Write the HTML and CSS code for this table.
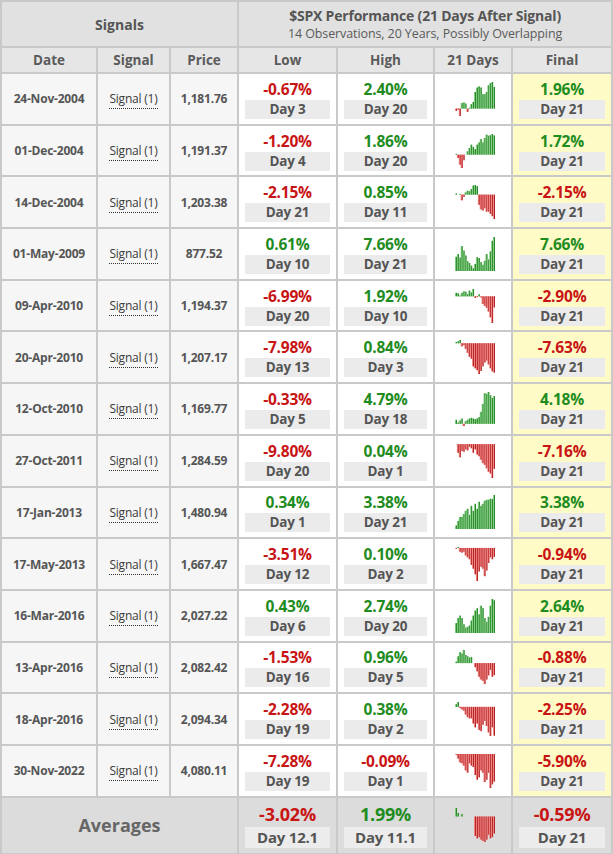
FILE: index.html
```html
<!DOCTYPE html>
<html lang="en">
<head>
<meta charset="utf-8">
<title>$SPX Performance</title>
<link rel="stylesheet" href="styles.css">
</head>
<body>
<table class="perf">
  <colgroup>
    <col class="c-date"><col class="c-signal"><col class="c-price"><col class="c-low"><col class="c-high"><col class="c-spark"><col class="c-final">
  </colgroup>
  <thead>
    <tr class="head-top">
      <th colspan="3" class="grp">Signals</th>
      <th colspan="4" class="grp">
        <div class="title">$SPX Performance (21 Days After Signal)</div>
        <div class="subtitle">14 Observations, 20 Years, Possibly Overlapping</div>
      </th>
    </tr>
    <tr class="head-cols">
      <th>Date</th><th>Signal</th><th>Price</th><th>Low</th><th>High</th><th>21 Days</th><th>Final</th>
    </tr>
  </thead>
  <tbody>
    <tr>
      <td class="info">24-Nov-2004</td><td class="info"><span class="sig">Signal (1)</span></td><td class="info">1,181.76</td>
      <td class="val"><div class="pct neg">-0.67%</div><div class="day">Day 3</div></td>
      <td class="val"><div class="pct pos">2.40%</div><div class="day">Day 20</div></td>
      <td class="chart"><div class="spark" data-v="-0.2,-0.1,-0.67,0.5,0.55,0.45,-0.3,0.05,0.4,0.6,1.5,1.9,2.0,1.9,1.3,1.3,1.5,2.1,2.3,2.40,1.96"></div></td>
      <td class="val final"><div class="pct pos">1.96%</div><div class="day">Day 21</div></td>
    </tr>
    <tr>
      <td class="info">01-Dec-2004</td><td class="info"><span class="sig">Signal (1)</span></td><td class="info">1,191.37</td>
      <td class="val"><div class="pct neg">-1.20%</div><div class="day">Day 4</div></td>
      <td class="val"><div class="pct pos">1.86%</div><div class="day">Day 20</div></td>
      <td class="chart"><div class="spark" data-v="0.05,-0.3,-0.9,-1.20,-0.5,0.0,0.3,0.6,0.9,0.7,0.5,0.9,1.1,1.4,1.1,1.5,1.8,1.7,1.75,1.86,1.72"></div></td>
      <td class="val final"><div class="pct pos">1.72%</div><div class="day">Day 21</div></td>
    </tr>
    <tr>
      <td class="info">14-Dec-2004</td><td class="info"><span class="sig">Signal (1)</span></td><td class="info">1,203.38</td>
      <td class="val"><div class="pct neg">-2.15%</div><div class="day">Day 21</div></td>
      <td class="val"><div class="pct pos">0.85%</div><div class="day">Day 11</div></td>
      <td class="chart"><div class="spark" data-v="0.1,0.0,0.05,-0.5,-0.2,0.2,0.35,0.3,0.5,0.8,0.85,0.75,-0.9,-1.3,-1.4,-1.2,-1.5,-1.5,-1.7,-1.9,-2.15"></div></td>
      <td class="val final"><div class="pct neg">-2.15%</div><div class="day">Day 21</div></td>
    </tr>
    <tr>
      <td class="info">01-May-2009</td><td class="info"><span class="sig">Signal (1)</span></td><td class="info">877.52</td>
      <td class="val"><div class="pct pos">0.61%</div><div class="day">Day 10</div></td>
      <td class="val"><div class="pct pos">7.66%</div><div class="day">Day 21</div></td>
      <td class="chart"><div class="spark" data-v="3.2,3.8,3.0,5.6,4.6,3.5,2.2,1.8,1.2,0.61,1.6,3.1,2.9,2.0,1.4,2.3,3.8,2.6,4.4,6.8,7.66"></div></td>
      <td class="val final"><div class="pct pos">7.66%</div><div class="day">Day 21</div></td>
    </tr>
    <tr>
      <td class="info">09-Apr-2010</td><td class="info"><span class="sig">Signal (1)</span></td><td class="info">1,194.37</td>
      <td class="val"><div class="pct neg">-6.99%</div><div class="day">Day 20</div></td>
      <td class="val"><div class="pct pos">1.92%</div><div class="day">Day 10</div></td>
      <td class="chart"><div class="spark" data-v="0.9,0.8,0.2,0.9,1.3,1.2,0.6,1.5,1.0,1.92,-0.4,-0.2,0.5,-0.3,-2.0,-2.5,-3.0,-4.0,-5.5,-6.99,-2.90"></div></td>
      <td class="val final"><div class="pct neg">-2.90%</div><div class="day">Day 21</div></td>
    </tr>
    <tr>
      <td class="info">20-Apr-2010</td><td class="info"><span class="sig">Signal (1)</span></td><td class="info">1,207.17</td>
      <td class="val"><div class="pct neg">-7.98%</div><div class="day">Day 13</div></td>
      <td class="val"><div class="pct pos">0.84%</div><div class="day">Day 3</div></td>
      <td class="chart"><div class="spark" data-v="0.3,0.5,0.84,-0.8,-0.5,-1.5,-2.5,-3.5,-4.0,-6.0,-6.5,-7.0,-7.98,-7.2,-6.0,-5.0,-4.5,-5.5,-6.5,-7.3,-7.63"></div></td>
      <td class="val final"><div class="pct neg">-7.63%</div><div class="day">Day 21</div></td>
    </tr>
    <tr>
      <td class="info">12-Oct-2010</td><td class="info"><span class="sig">Signal (1)</span></td><td class="info">1,169.77</td>
      <td class="val"><div class="pct neg">-0.33%</div><div class="day">Day 5</div></td>
      <td class="val"><div class="pct pos">4.79%</div><div class="day">Day 18</div></td>
      <td class="chart"><div class="spark" data-v="0.6,0.2,0.5,0.8,-0.33,0.4,0.6,0.8,0.9,0.8,0.7,0.8,1.0,1.8,3.0,4.6,4.5,4.79,4.3,3.9,4.18"></div></td>
      <td class="val final"><div class="pct pos">4.18%</div><div class="day">Day 21</div></td>
    </tr>
    <tr>
      <td class="info">27-Oct-2011</td><td class="info"><span class="sig">Signal (1)</span></td><td class="info">1,284.59</td>
      <td class="val"><div class="pct neg">-9.80%</div><div class="day">Day 20</div></td>
      <td class="val"><div class="pct pos">0.04%</div><div class="day">Day 1</div></td>
      <td class="chart"><div class="spark" data-v="0.04,-2.5,-3.8,-2.0,-2.2,-1.5,-1.8,-0.8,-1.2,-2.5,-1.5,-3.0,-3.5,-4.5,-5.5,-6.0,-7.0,-8.0,-8.5,-9.80,-7.16"></div></td>
      <td class="val final"><div class="pct neg">-7.16%</div><div class="day">Day 21</div></td>
    </tr>
    <tr>
      <td class="info">17-Jan-2013</td><td class="info"><span class="sig">Signal (1)</span></td><td class="info">1,480.94</td>
      <td class="val"><div class="pct pos">0.34%</div><div class="day">Day 1</div></td>
      <td class="val"><div class="pct pos">3.38%</div><div class="day">Day 21</div></td>
      <td class="chart"><div class="spark" data-v="0.34,0.8,1.2,1.2,1.5,1.8,2.0,1.4,2.3,1.8,2.5,2.0,2.7,2.3,2.5,2.8,2.9,2.9,3.0,3.0,3.38"></div></td>
      <td class="val final"><div class="pct pos">3.38%</div><div class="day">Day 21</div></td>
    </tr>
    <tr>
      <td class="info">17-May-2013</td><td class="info"><span class="sig">Signal (1)</span></td><td class="info">1,667.47</td>
      <td class="val"><div class="pct neg">-3.51%</div><div class="day">Day 12</div></td>
      <td class="val"><div class="pct pos">0.10%</div><div class="day">Day 2</div></td>
      <td class="chart"><div class="spark" data-v="-0.05,0.10,-0.4,-0.5,-0.4,-0.8,-1.0,-1.2,-1.8,-2.2,-2.8,-3.51,-2.5,-2.0,-2.2,-3.0,-2.4,-1.6,-1.0,-1.2,-0.94"></div></td>
      <td class="val final"><div class="pct neg">-0.94%</div><div class="day">Day 21</div></td>
    </tr>
    <tr>
      <td class="info">16-Mar-2016</td><td class="info"><span class="sig">Signal (1)</span></td><td class="info">2,027.22</td>
      <td class="val"><div class="pct pos">0.43%</div><div class="day">Day 6</div></td>
      <td class="val"><div class="pct pos">2.74%</div><div class="day">Day 20</div></td>
      <td class="chart"><div class="spark" data-v="0.8,1.2,1.4,1.2,0.7,0.43,0.5,0.6,1.0,1.4,1.8,2.0,1.5,2.2,2.0,1.2,0.9,1.3,2.2,2.74,2.64"></div></td>
      <td class="val final"><div class="pct pos">2.64%</div><div class="day">Day 21</div></td>
    </tr>
    <tr>
      <td class="info">13-Apr-2016</td><td class="info"><span class="sig">Signal (1)</span></td><td class="info">2,082.42</td>
      <td class="val"><div class="pct neg">-1.53%</div><div class="day">Day 16</div></td>
      <td class="val"><div class="pct pos">0.96%</div><div class="day">Day 5</div></td>
      <td class="chart"><div class="spark" data-v="0.1,0.5,0.8,0.7,0.96,0.6,0.5,0.4,0.45,0.0,-0.3,-0.6,-1.0,-1.2,-1.3,-1.53,-1.2,-0.9,-0.5,-1.0,-0.88"></div></td>
      <td class="val final"><div class="pct neg">-0.88%</div><div class="day">Day 21</div></td>
    </tr>
    <tr>
      <td class="info">18-Apr-2016</td><td class="info"><span class="sig">Signal (1)</span></td><td class="info">2,094.34</td>
      <td class="val"><div class="pct neg">-2.28%</div><div class="day">Day 19</div></td>
      <td class="val"><div class="pct pos">0.38%</div><div class="day">Day 2</div></td>
      <td class="chart"><div class="spark" data-v="0.2,0.38,-0.1,-0.2,-0.3,-0.6,-0.8,-0.9,-0.9,-1.3,-1.6,-1.3,-1.8,-1.9,-1.4,-1.1,-1.5,-2.0,-2.28,-1.6,-2.25"></div></td>
      <td class="val final"><div class="pct neg">-2.25%</div><div class="day">Day 21</div></td>
    </tr>
    <tr>
      <td class="info">30-Nov-2022</td><td class="info"><span class="sig">Signal (1)</span></td><td class="info">4,080.11</td>
      <td class="val"><div class="pct neg">-7.28%</div><div class="day">Day 19</div></td>
      <td class="val"><div class="pct neg">-0.09%</div><div class="day">Day 1</div></td>
      <td class="chart"><div class="spark" data-v="-0.09,-1.0,-1.8,-2.0,-2.5,-3.5,-4.0,-2.0,-2.5,-2.8,-4.5,-5.5,-5.0,-3.5,-4.0,-6.0,-5.5,-4.0,-7.28,-6.5,-5.90"></div></td>
      <td class="val final"><div class="pct neg">-5.90%</div><div class="day">Day 21</div></td>
    </tr>
  </tbody>
  <tfoot>
    <tr class="avg">
      <td colspan="3" class="avg-label">Averages</td>
      <td class="val"><div class="pct neg">-3.02%</div><div class="day">Day 12.1</div></td>
      <td class="val"><div class="pct pos">1.99%</div><div class="day">Day 11.1</div></td>
      <td class="chart"><div class="spark" data-v="0.35,0.15,0,0.1,0,0,0,0,0,0,-0.8,-0.9,-0.85,-0.95,-1.0,-1.05,-0.95,-0.75,-0.9,-0.85,-0.7"></div></td>
      <td class="val"><div class="pct neg">-0.59%</div><div class="day">Day 21</div></td>
    </tr>
  </tfoot>
</table>
<script src="script.js"></script>
</body>
</html>
```

FILE: styles.css
```css
html, body {
  margin: 0;
  padding: 0;
  background: #ffffff;
}

body {
  font-family: "Open Sans", "Noto Sans", "DejaVu Sans", sans-serif;
  color: #555555;
}

.perf {
  width: 613px;
  table-layout: fixed;
  border-collapse: separate;
  border-spacing: 0;
  border: 1px solid #c9c9c9;
}

.c-date { width: 96px; }
.c-signal { width: 73px; }
.c-price { width: 68px; }
.c-low { width: 99px; }
.c-high { width: 97px; }
.c-spark { width: 78px; }
.c-final { width: 100px; }

.perf th,
.perf td {
  border: 1px solid #c9c9c9;
  padding: 0;
  text-align: center;
  vertical-align: middle;
}

.head-top th {
  background: #e1e1e1;
  height: 44px;
  font-size: 14px;
  font-weight: 700;
  color: #555555;
}

.title {
  font-size: 14px;
  font-weight: 700;
  color: #555555;
  line-height: 18px;
  letter-spacing: -0.2px;
}

.subtitle {
  font-size: 12.5px;
  font-weight: 400;
  color: #5a5a5a;
  line-height: 17px;
  letter-spacing: -0.1px;
}

.head-cols th {
  background: #e6e6e6;
  height: 24px;
  font-size: 13.5px;
  font-weight: 700;
  color: #5a5a5a;
}

tbody tr {
  height: 51.7px;
}

.info {
  background: #f6f6f6;
  font-size: 12px;
  font-weight: 700;
  color: #555555;
  letter-spacing: -0.2px;
}

.sig {
  font-weight: 500;
  color: #3a3a3a;
  border-bottom: 1px dotted #333333;
  padding-bottom: 1px;
}

.val {
  background: #ffffff;
}

.val.final {
  background: #fefbc6;
}

.pct {
  font-size: 15.5px;
  font-weight: 700;
  line-height: 20px;
  letter-spacing: -0.2px;
}

.pct.neg { color: #c81414; }
.pct.pos { color: #1f8c1f; }

.day {
  margin: 1px 6px 0;
  background: #ebebeb;
  font-size: 13.5px;
  font-weight: 700;
  color: #555555;
  line-height: 19px;
  letter-spacing: -0.2px;
}

.chart {
  background: #ffffff;
}

.spark {
  display: flex;
  justify-content: center;
  align-items: center;
  padding-left: 3px;
}

.spark svg {
  display: block;
}

.avg td {
  background: #dcdcdc;
  height: 55px;
}

.avg .avg-label {
  font-size: 18px;
  font-weight: 700;
  color: #666666;
}

.avg .pct {
  font-size: 18px;
  line-height: 23px;
}

.avg .day {
  font-size: 15px;
  line-height: 21px;
  background: #ececec;
}
```

FILE: script.js
```js
(function () {
  var W = 40, H = 34;
  var sparks = document.querySelectorAll('.spark');
  for (var k = 0; k < sparks.length; k++) {
    var el = sparks[k];
    var v = el.getAttribute('data-v').split(',').map(Number);
    var n = v.length, bw = W / n;
    var mx = Math.max.apply(null, [0].concat(v));
    var mn = Math.min.apply(null, [0].concat(v));
    var sc = H / (mx - mn || 1);
    var y0 = mx * sc;
    var s = '<svg xmlns="http://www.w3.org/2000/svg" width="' + W + '" height="' + H + '" viewBox="0 0 ' + W + ' ' + H + '">';
    for (var i = 0; i < n; i++) {
      var x = v[i];
      if (x === 0) { continue; }
      var h = Math.max(Math.abs(x) * sc, 0.8);
      var pos = x > 0;
      var y = pos ? y0 - h : y0;
      var light = pos ? '#7ccb7c' : '#f07c7c';
      var dark = pos ? '#1c7a1c' : '#a81616';
      s += '<rect x="' + (i * bw).toFixed(2) + '" y="' + y.toFixed(2) + '" width="' + bw.toFixed(2) + '" height="' + h.toFixed(2) + '" fill="' + light + '"/>';
      s += '<rect x="' + (i * bw + bw * 0.55).toFixed(2) + '" y="' + y.toFixed(2) + '" width="' + (bw * 0.45).toFixed(2) + '" height="' + h.toFixed(2) + '" fill="' + dark + '"/>';
    }
    s += '</svg>';
    el.innerHTML = s;
  }
})();
```
